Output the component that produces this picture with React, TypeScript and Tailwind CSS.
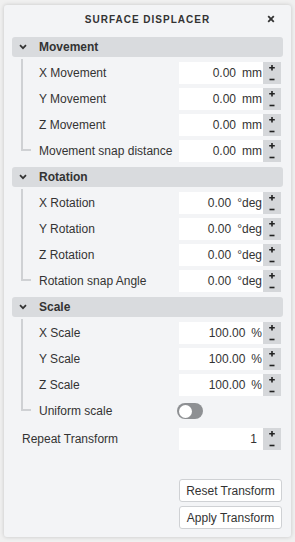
import type { ReactNode } from 'react'

const font = { fontFamily: '"Liberation Sans", Arial, Helvetica, sans-serif' }

function Stepper() {
    return (
        <div className="w-[18px] h-[22px] bg-[#d5d7da] shrink-0">
            <svg width="18" height="22" viewBox="0 0 18 22">
                <path d="M9 3 V8.5 M6.2 5.7 H11.8" stroke="#222" strokeWidth="1.6" fill="none" />
                <path d="M6.5 17.5 H11.5" stroke="#222" strokeWidth="1.6" fill="none" />
            </svg>
        </div>
    )
}

function ValueInput({ value, unit }: { value: string; unit?: string }) {
    return (
        <div className="flex items-center mr-[2px]">
            <div className={`w-[84px] h-[22px] bg-white flex items-center justify-end gap-[6px] text-[12px] text-[#333] ${unit ? 'pr-[1px]' : 'pr-[6px]'}`}>
                <span>{value}</span>
                {unit && <span>{unit}</span>}
            </div>
            <Stepper />
        </div>
    )
}

function Row({ label, children }: { label: string; children: ReactNode }) {
    return (
        <div className="flex items-center h-[22px]">
            <span className="flex-1 text-[12px] text-[#333] whitespace-nowrap">{label}</span>
            {children}
        </div>
    )
}

function Section({ title, children }: { title: string; children: ReactNode }) {
    return (
        <div>
            <div className="h-[20px] bg-[#d9dbde] rounded-[3px] flex items-center">
                <svg width="8" height="6" viewBox="0 0 8 6" className="ml-[7px]">
                    <path d="M1 1.2 L4 4.2 L7 1.2" stroke="#333" strokeWidth="1.7" fill="none" />
                </svg>
                <span className="ml-[12px] text-[12px] font-bold text-[#333]">{title}</span>
            </div>
            <div className="flex">
                <div className="ml-[9px] mt-[2px] mb-[11px] w-[10px] border-l-2 border-b-2 border-[#cfd1d4]" />
                <div className="flex-1 ml-[8px] pt-[5px] flex flex-col gap-[4px]">{children}</div>
            </div>
        </div>
    )
}

export default function App() {
    return (
        <div className="min-h-screen bg-[#f0f0f0] pt-[5px] pl-[4px]" style={font}>
            <div className="w-[287px] h-[532px] bg-[#f3f4f6] rounded-[3px] shadow-[0_0_4px_rgba(0,0,0,0.18)] px-2 flex flex-col">
                <div className="h-[28px] relative flex items-center justify-center">
                    <span className="text-[10px] font-bold tracking-[1px] text-[#333]">SURFACE DISPLACER</span>
                    <svg width="8" height="8" viewBox="0 0 8 8" className="absolute right-[8px] top-[10px]">
                        <path d="M1.2 1.2 L6.8 6.8 M6.8 1.2 L1.2 6.8" stroke="#333" strokeWidth="1.8" fill="none" />
                    </svg>
                </div>

                <div className="mt-[4px] flex flex-col gap-[5px]">
                    <Section title="Movement">
                        <Row label="X Movement"><ValueInput value="0.00" unit="mm" /></Row>
                        <Row label="Y Movement"><ValueInput value="0.00" unit="mm" /></Row>
                        <Row label="Z Movement"><ValueInput value="0.00" unit="mm" /></Row>
                        <Row label="Movement snap distance"><ValueInput value="0.00" unit="mm" /></Row>
                    </Section>
                    <Section title="Rotation">
                        <Row label="X Rotation"><ValueInput value="0.00" unit="°deg" /></Row>
                        <Row label="Y Rotation"><ValueInput value="0.00" unit="°deg" /></Row>
                        <Row label="Z Rotation"><ValueInput value="0.00" unit="°deg" /></Row>
                        <Row label="Rotation snap Angle"><ValueInput value="0.00" unit="°deg" /></Row>
                    </Section>
                    <Section title="Scale">
                        <Row label="X Scale"><ValueInput value="100.00" unit="%" /></Row>
                        <Row label="Y Scale"><ValueInput value="100.00" unit="%" /></Row>
                        <Row label="Z Scale"><ValueInput value="100.00" unit="%" /></Row>
                        <Row label="Uniform scale">
                            <div className="w-[104px] mr-[2px] flex items-center">
                                <div className="w-[26px] h-[16px] rounded-full bg-[#8e9093] flex items-center pl-[1.5px]">
                                    <div className="w-[13px] h-[13px] rounded-full bg-white" />
                                </div>
                            </div>
                        </Row>
                    </Section>
                </div>

                <div className="mt-[6px] ml-[10px]">
                    <Row label="Repeat Transform"><ValueInput value="1" /></Row>
                </div>

                <div className="mt-[29px] flex flex-col items-end gap-[4px] mr-[1px]">
                    <button className="w-[103px] h-[23px] bg-white border border-[#cfd1d4] rounded-[3px] text-[12px] text-[#333]">Reset Transform</button>
                    <button className="w-[103px] h-[23px] bg-white border border-[#cfd1d4] rounded-[3px] text-[12px] text-[#333]">Apply Transform</button>
                </div>
            </div>
        </div>
    )
}
